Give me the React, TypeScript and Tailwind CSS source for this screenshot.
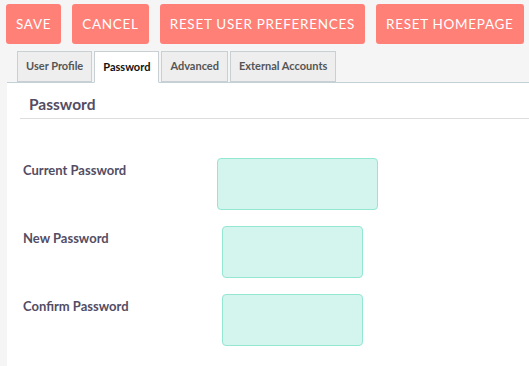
import React from "react";

const buttons = ["Save", "Cancel", "Reset User Preferences", "Reset Homepage"];
const tabs = ["User Profile", "Password", "Advanced", "External Accounts"];

function Field({ label, inputClass }: { label: string; inputClass: string }) {
  return (
    <div className="flex items-start h-[68px]">
      <div className="w-[194px] pl-[16px] pt-[3px] text-[13px] leading-[18px] font-bold text-[#534d64]">{label}</div>
      <div className={"h-[52px] rounded-[4px] border border-[#93e6d2] bg-[#d3f5ee] " + inputClass}></div>
    </div>
  );
}

export default function App() {
  return (
    <div className="w-[529px] h-[366px] overflow-hidden bg-[#f5f5f5] font-['Lato',sans-serif]">
      <div className="flex gap-[11px] pl-[6px] pt-[4px]">
        {buttons.map((b) => (
          <button
            key={b}
            className="h-[40px] shrink-0 whitespace-nowrap px-[10px] rounded-[3px] bg-[#ff8077] text-white text-[13.5px] uppercase tracking-[0.7px]"
          >
            {b}
          </button>
        ))}
      </div>
      <div className="flex gap-[2px] pl-[10px] mt-[7px] ml-[7px] border-b border-[#c3d0d5]">
        {tabs.map((t) => (
          <div
            key={t}
            className={
              t === "Password"
                ? "h-[32px] -mb-px px-[8px] flex items-center border border-[#c8d0d3] border-b-white bg-white text-[11px] font-bold text-[#111]"
                : "h-[31px] px-[8px] flex items-center border border-[#c8d0d3] bg-[#eeeeee] text-[11px] font-bold text-[#555]"
            }
          >
            {t}
          </div>
        ))}
      </div>
      <div className="ml-[7px] bg-white h-full">
        <div className="ml-[13px] border-b border-[#dddddd] pl-[9px] pt-[10px] pb-[2px] text-[15.5px] leading-[23px] font-bold text-[#534d64]">
          Password
        </div>
        <div className="pt-[39px]">
          <Field label="Current Password" inputClass="w-[161px] ml-[16px]" />
          <Field label="New Password" inputClass="w-[141px] ml-[21px]" />
          <Field label="Confirm Password" inputClass="w-[141px] ml-[21px]" />
        </div>
      </div>
    </div>
  );
}
